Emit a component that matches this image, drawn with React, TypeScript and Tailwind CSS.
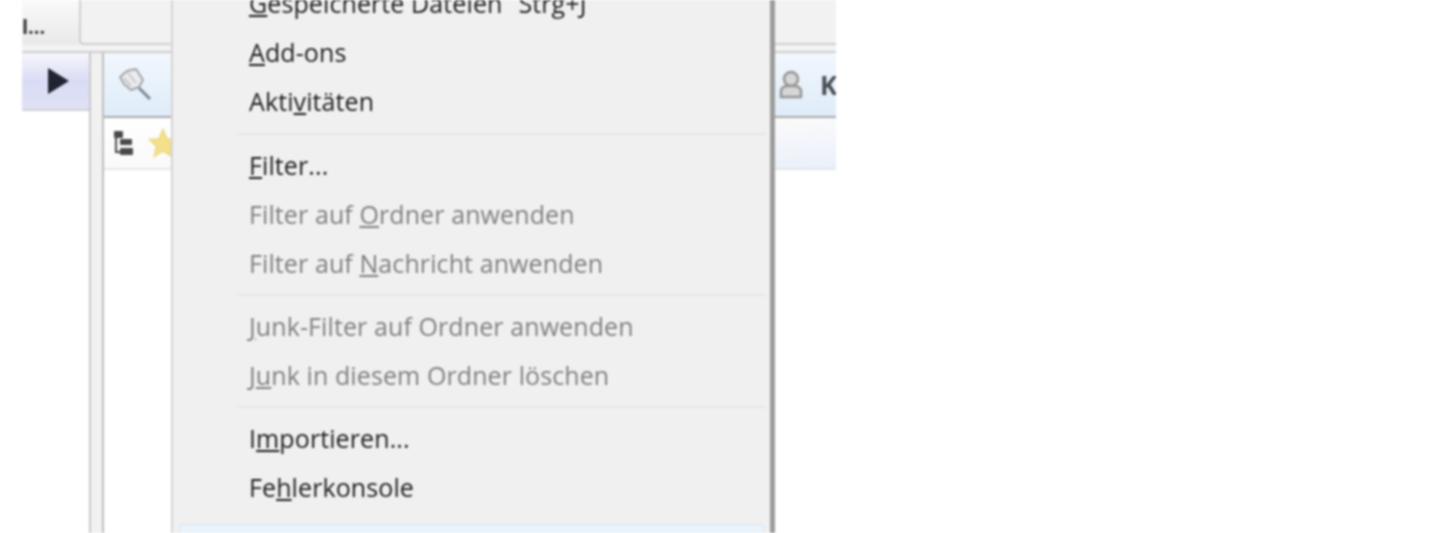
import React from "react";

function Item({ children, disabled, shortcut }: { children: React.ReactNode; disabled?: boolean; shortcut?: string }) {
  return (
    <div className={`flex h-[49px] items-center pl-[74px] text-[25px] leading-none ${disabled ? "tracking-[0.1px] text-[#7f7f7f]" : "font-medium tracking-[0.1px] text-[#1c1c1c]"}`}>
      <span className="whitespace-nowrap">{children}</span>
      {shortcut && <span className="ml-4 whitespace-nowrap">{shortcut}</span>}
    </div>
  );
}

function Sep({ h }: { h: string }) {
  return (
    <div className={`flex items-center pl-[62px] pr-[4px] ${h}`}>
      <div className="h-[2px] w-full bg-[#e6e6e6]" />
    </div>
  );
}

export default function App() {
  return (
    <div className="relative h-[533px] w-[1440px] overflow-hidden bg-white pl-[22px] font-['Open_Sans','Noto_Sans',sans-serif] blur-[0.8px]">
      <div className="flex h-full w-[814px] flex-col overflow-hidden">
        {/* top strip */}
        <div className="flex h-[45px] shrink-0">
          <div className="flex w-[57px] items-end bg-gradient-to-b from-[#fafafa] to-[#e9e9e9] pb-[8px] text-[20px] font-bold leading-none text-[#333]">
            l...
          </div>
          <div className="flex-1 rounded-bl-[4px] border-b-2 border-l-2 border-[#cfcfcf] bg-[#f2f2f2]" />
        </div>
        <div className="h-[8px] shrink-0 border-b-2 border-[#cdcdcd] bg-[#f3f3f3]" />
        {/* body */}
        <div className="flex flex-1">
          <div className="w-[67px] shrink-0">
            <div className="flex h-[58px] items-center justify-end border-b-2 border-[#d2d2d2] bg-gradient-to-b from-[#f6f7fd] via-[#d9dcf4] to-[#dfe2f4] pr-[19px]">
              <svg width="24" height="28" viewBox="0 0 24 28"><path d="M2 1 L23 14 L2 27 Z" fill="#1f2430" /></svg>
            </div>
          </div>
          <div className="w-[15px] shrink-0 border-x-2 border-l-[#c9c9c9] border-r-[#bdbdbd] bg-[#f1f1f1]" />
          <div className="flex-1">
            <div className="flex h-[65px] items-center justify-between border-b-2 border-[#a9a9a9] bg-gradient-to-b from-[#f2f7fd] to-[#dfecf9] pl-[12px]">
              <svg width="38" height="38" viewBox="0 0 38 38">
                <path d="M11 5 L20 3 L27 14 L23 21 L15 24 L8 18 L4 11 Z" fill="#ececec" stroke="#a2a6ac" strokeWidth="2" strokeLinejoin="round" />
                <path d="M12 7 L20 17 M8 12 L15 20" stroke="#c4c8cc" strokeWidth="2" fill="none" />
                <path d="M23 22 L34 33" strokeWidth="3" stroke="#7f8894" fill="none" />
              </svg>
              <div className="flex w-[58px] shrink-0 items-center gap-[16px]">
                <svg className="shrink-0" width="26" height="30" viewBox="0 0 26 30" fill="#d6d6d6" stroke="#969696" strokeWidth="2.5">
                  <circle cx="13" cy="9" r="7" />
                  <path d="M3 27 V21 Q3 17 9 16 H17 Q23 17 23 21 V27 Z" />
                </svg>
                <span className="text-[26px] font-bold leading-none text-[#4a4f55]">K</span>
              </div>
            </div>
            <div className="flex h-[52px] items-center gap-[13px] border-b-2 border-[#e2e6ec] bg-gradient-to-br from-[#ffffff] via-[#fafafa] to-[#eaf0fa] pl-[9px]">
              <svg width="22" height="28" viewBox="0 0 22 28" fill="#4a4a4a">
                <rect x="1" y="2" width="9" height="7" rx="1" />
                <rect x="7" y="10" width="12" height="6" rx="1" />
                <rect x="7" y="19" width="13" height="7" rx="1" />
                <path d="M3 8 V23 H8" stroke="#4a4a4a" strokeWidth="2" fill="none" />
              </svg>
              <svg width="30" height="30" viewBox="0 0 24 24" fill="#f6e08a" stroke="#efdc8c" strokeWidth="2">
                <path d="M12 2 L15 9 L22 9.5 L17 14.5 L18.5 22 L12 18 L5.5 22 L7 14.5 L2 9.5 L9 9 Z" />
              </svg>
            </div>
          </div>
        </div>
      </div>

      {/* open menu */}
      <div className="absolute left-[171px] top-[-21px] h-[560px] w-[604px] border-l-2 border-r-[5px] border-l-[#d4d4d4] border-r-[#9c9c9c] bg-[#f0f0f0]">
        <div className="h-full border-l-2 border-transparent">
          <Item shortcut="Strg+J"><u>G</u>espeicherte Dateien</Item>
          <Item><u>A</u>dd-ons</Item>
          <Item>Akti<u>v</u>itäten</Item>
          <Sep h="h-[15px]" />
          <Item><u>F</u>ilter...</Item>
          <Item disabled>Filter auf <u>O</u>rdner anwenden</Item>
          <Item disabled>Filter auf <u>N</u>achricht anwenden</Item>
          <Sep h="h-[14px]" />
          <Item disabled><u>J</u>unk-Filter auf Ordner anwenden</Item>
          <Item disabled>J<u>u</u>nk in diesem Ordner löschen</Item>
          <Sep h="h-[14px]" />
          <Item>I<u>m</u>portieren...</Item>
          <Item>Fe<u>h</u>lerkonsole</Item>
          <div className="mt-[12px] ml-[4px] mr-[6px] h-[40px] rounded-[3px] border border-[#d5e6f5] bg-[#e9f3fb]" />
        </div>
      </div>
    </div>
  );
}
